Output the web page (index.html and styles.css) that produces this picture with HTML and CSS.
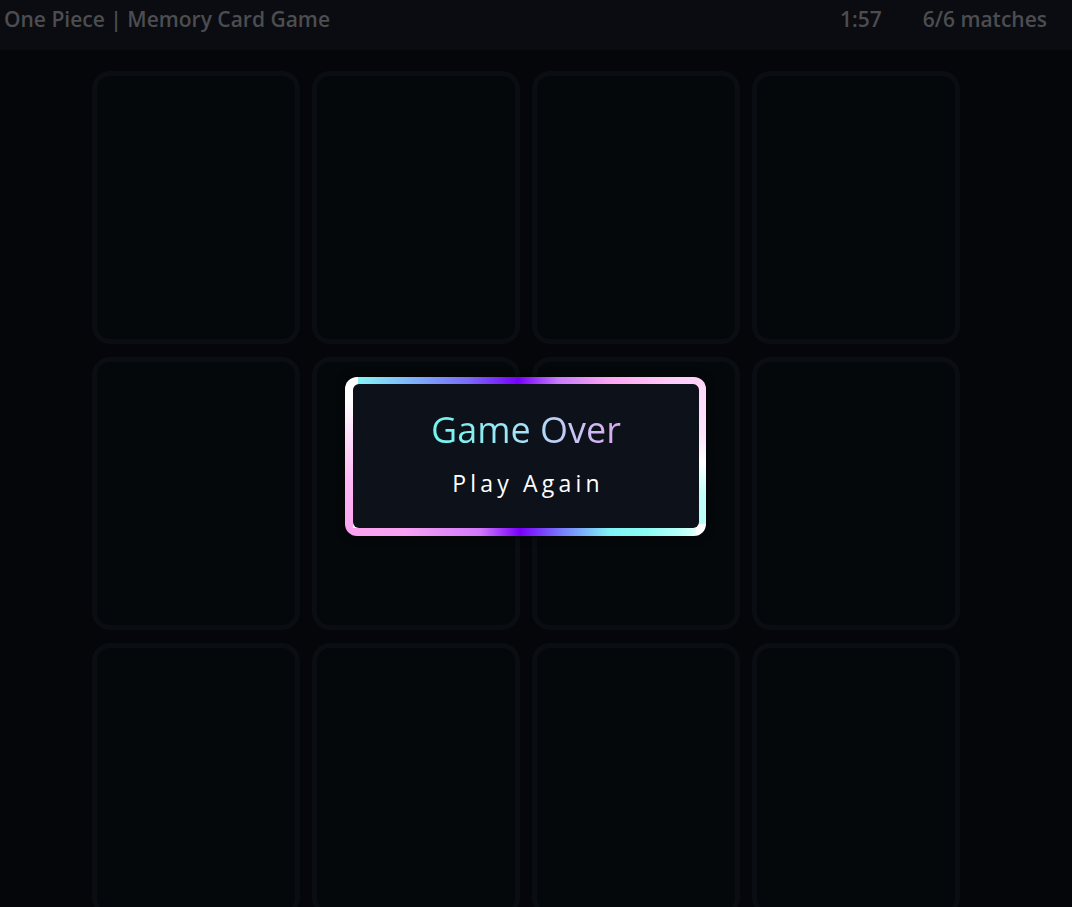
FILE: index.html
```html
<!DOCTYPE html>
<html lang="en">
<head>
<meta charset="utf-8">
<title>One Piece | Memory Card Game</title>
<link rel="stylesheet" href="styles.css">
</head>
<body>
<header class="topbar">
  <div class="title">One Piece | Memory Card Game</div>
  <div class="stats">
    <span class="timer">1:57</span>
    <span class="matches">6/6 matches</span>
  </div>
</header>
<main class="board">
  <div class="grid">
    <div class="card"></div><div class="card"></div><div class="card"></div><div class="card"></div>
    <div class="card"></div><div class="card"></div><div class="card"></div><div class="card"></div>
    <div class="card"></div><div class="card"></div><div class="card"></div><div class="card"></div>
  </div>
</main>
<div class="modal">
  <div class="modal-inner">
    <div class="over">Game Over</div>
    <button class="again">Play Again</button>
  </div>
</div>
</body>
</html>
```

FILE: styles.css
```css
html, body {
  margin: 0;
  padding: 0;
  background: #040609;
  overflow: hidden;
  height: 100%;
}
body {
  font-family: "Open Sans", "Noto Sans", sans-serif;
}
.topbar {
  height: 50px;
  background: #0a0c11;
  display: flex;
  align-items: center;
  justify-content: space-between;
  padding: 0 25px 0 4px;
  color: #4c4d50;
  font-weight: 600;
  font-size: 21px;
}
.title {
  margin-top: -13px;
}
.stats {
  display: flex;
  gap: 41px;
  margin-top: -13px;
}
.board {
  padding: 21px 0 0 92px;
}
.grid {
  display: grid;
  grid-template-columns: repeat(4, 208px);
  grid-auto-rows: 273px;
  column-gap: 12px;
  row-gap: 13px;
}
.card {
  box-sizing: border-box;
  border: 5px solid #0a0d12;
  border-radius: 18px;
  background: #05080b;
}
.modal {
  position: absolute;
  left: 345px;
  top: 377px;
  width: 361px;
  height: 159px;
  box-sizing: border-box;
  padding: 7px 7px 8px 8px;
  border-radius: 12px;
  box-shadow: 0 0 8px rgba(0,0,0,0.7);
  background:
    linear-gradient(90deg, #86f4f6 0px, #7fb8fb 50px, #7a6cf8 110px, #7800fb 160px, #c77cf9 200px, #fda4f2 250px, #ffcaf9 310px, #ffd8fb 361px) 13px 0 / calc(100% - 13px) 8px no-repeat,
    linear-gradient(180deg, #ffd8fb 0%, #ffe4fb 40%, #ffffff 58%, #c4fff9 78%, #b6fff8 100%) 100% 0 / 8px calc(100% - 12px) no-repeat,
    linear-gradient(90deg, #fca4f0 0px, #f7a2f4 60px, #d279fb 135px, #7a00fb 175px, #7786fb 220px, #80f4f4 265px, #8afcf4 300px, #b7fff9 335px, #dffffc 350px) 0 100% / calc(100% - 10px) 8px no-repeat,
    linear-gradient(0deg, #fca2f0 0%, #ffb8f6 35%, #ffe2fb 65%, #ffffff 85%) 0 0 / 8px 100% no-repeat,
    #ffffff;
}
.modal-inner {
  height: 100%;
  background: #0d121a;
  border-radius: 6px;
  display: flex;
  flex-direction: column;
  align-items: center;
  padding-top: 22px;
  box-sizing: border-box;
}
.over {
  font-size: 36px;
  font-weight: 400;
  line-height: 48px;
  background: linear-gradient(90deg, #72f5ee 0%, #9fe6f6 45%, #c9c6f7 75%, #dca6ef 100%);
  -webkit-background-clip: text;
  background-clip: text;
  color: transparent;
}
.again {
  margin-top: 13px;
  margin-left: 4px;
  background: none;
  border: none;
  padding: 0;
  color: #ffffff;
  font-family: "Open Sans", "Noto Sans", sans-serif;
  font-size: 23px;
  letter-spacing: 4.2px;
  line-height: 32px;
  cursor: pointer;
}
```
